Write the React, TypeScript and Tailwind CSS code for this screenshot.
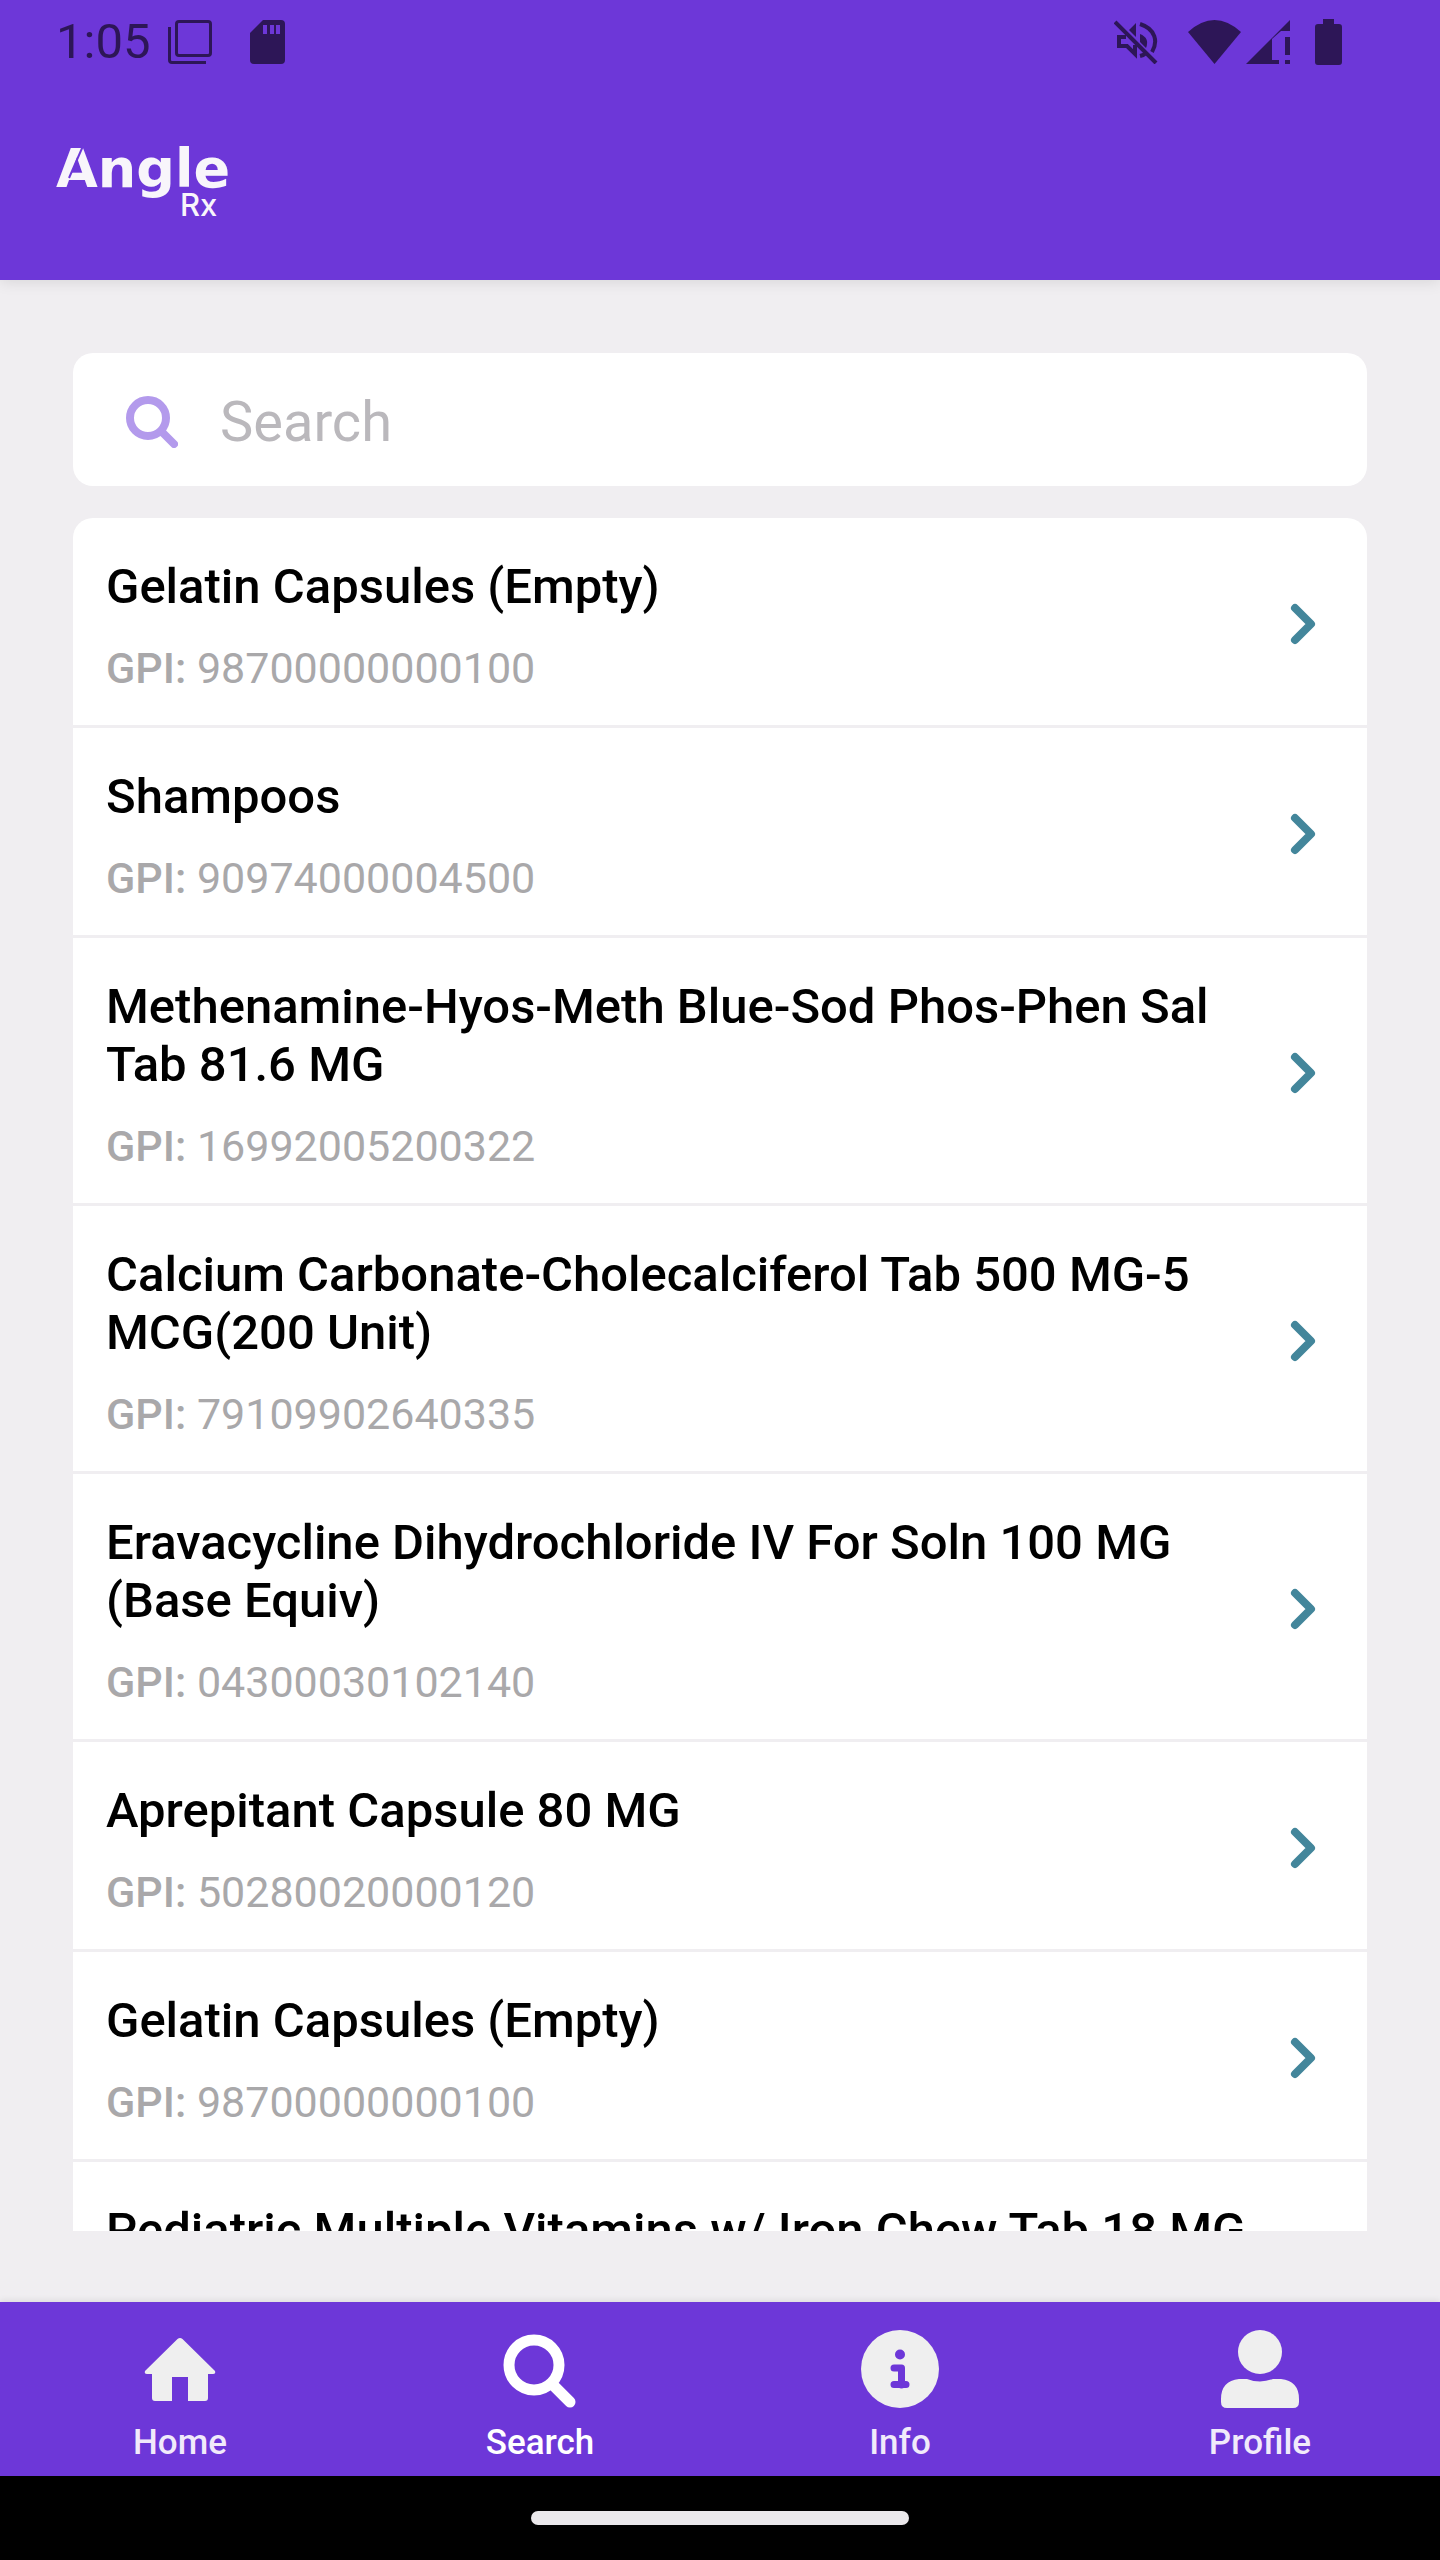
import React from 'react';

const drugs = [
  { name: 'Gelatin Capsules (Empty)', gpi: '98700000000100' },
  { name: 'Shampoos', gpi: '90974000004500' },
  { name: 'Methenamine-Hyos-Meth Blue-Sod Phos-Phen Sal Tab 81.6 MG', gpi: '16992005200322' },
  { name: 'Calcium Carbonate-Cholecalciferol Tab 500 MG-5 MCG(200 Unit)', gpi: '79109902640335' },
  { name: 'Eravacycline Dihydrochloride IV For Soln 100 MG (Base Equiv)', gpi: '04300030102140' },
  { name: 'Aprepitant Capsule 80 MG', gpi: '50280020000120' },
  { name: 'Gelatin Capsules (Empty)', gpi: '98700000000100' },
  { name: 'Pediatric Multiple Vitamins w/ Iron Chew Tab 18 MG', gpi: '' },
];

const StatusBar: React.FC = () => (
  <div className="flex h-[84px] items-center justify-between pl-14 pr-[98px] text-[#2d1657]">
    <div className="flex items-center">
      <span className="text-[49px] leading-[56px]">1:05</span>
      <svg className="ml-[18px] h-11 w-11" viewBox="0 0 44 44" fill="none" stroke="currentColor" strokeWidth="3">
        <rect x="8.5" y="1.5" width="34" height="34" rx="2.5" />
        <path d="M1.5 7v33q0 2.500 2.500 2.500h34" />
      </svg>
      <svg className="ml-[38px] h-11 w-[35px]" viewBox="0 0 35 44">
        <path fill="currentColor" d="M13 0h18a4 4 0 0 1 4 4v36a4 4 0 0 1-4 4H4a4 4 0 0 1-4-4V13z" />
        <path fill="#6d37d8" d="M13 5h4v9h-4zM20 5h4v9h-4zM26 5h4v9h-4z" />
      </svg>
    </div>
    <div className="flex items-center">
      <svg className="h-11 w-11" viewBox="0 0 44 44" fill="none" stroke="currentColor" strokeWidth="4">
        <path d="M1 2l41 41" />
        <path d="M12 17H5v9h8l8 8V25" />
        <path d="M26 4c16 5 18 18 12 28" />
        <path d="M26 36q4-1 6-3" />
        <path fill="currentColor" stroke="none" d="M22 3v14l-7-7zM26 14q10 4 6 14l-6-6z" />
      </svg>
      <svg className="ml-[30px] h-11 w-[53px]" viewBox="0 0 53 44">
        <path fill="currentColor" d="M0 12Q26.500-12 53 12L26.500 44z" />
      </svg>
      <svg className="ml-[5px] h-11 w-11" viewBox="0 0 44 44" fill="currentColor">
        <path d="M44 0v11H35L26 19v21h7v4H0z" />
        <path d="M39 17h5v18h-5zM39 40h5v4h-5z" />
      </svg>
      <svg className="ml-[25px] h-[46px] w-[27px]" viewBox="0 0 27 46" fill="currentColor">
        <path d="M8 0h11v5h5a3 3 0 0 1 3 3v35a3 3 0 0 1-3 3H3a3 3 0 0 1-3-3V8a3 3 0 0 1 3-3h5z" />
      </svg>
    </div>
  </div>
);

const Logo: React.FC = () => (
  <svg className="h-[84px] w-[180px] overflow-visible" viewBox="0 0 180 84" fill="#f8f5fb" role="img" aria-label="Angle Rx">
    <text x="0" y="47" fontFamily="DejaVu Sans, sans-serif" fontSize="54" fontWeight="700">Angle</text>
    <path d="M27 6L13 38" stroke="#6d37d8" strokeWidth="2" />
    <text x="124" y="76" fontFamily="Inter, sans-serif" fontSize="31" fontWeight="500">Rx</text>
  </svg>
);

const SearchIcon: React.FC<{ className: string }> = ({ className }) => (
  <svg className={className} viewBox="0 0 52 52" fill="none" stroke="currentColor" strokeLinecap="round" strokeWidth="8">
    <circle cx="22" cy="22" r="18" />
    <path d="M36 36l12 12" />
  </svg>
);

const tabs = [
  {
    label: 'Home',
    icon: (
      <svg className="h-[78px] w-[78px]" viewBox="0 0 78 78" fill="#efefef">
        <path d="M36.500 9q2.500-2 5 0L74 41q1 3-2 3H67v24q0 3-3 3H47V47H31v24H14q-3 0-3-3V44H6q-3 0-2-3z" />
      </svg>
    ),
  },
  {
    label: 'Search',
    active: true,
    icon: (
      <svg className="h-[78px] w-[78px]" viewBox="0 0 78 78" fill="none" stroke="#fff" strokeLinecap="round">
        <circle cx="33" cy="35" r="25" strokeWidth="11" />
        <path d="M54 57l15 15" strokeWidth="11" />
      </svg>
    ),
  },
  {
    label: 'Info',
    icon: (
      <svg className="h-[78px] w-[78px]" viewBox="0 0 78 78">
        <circle cx="39" cy="39" r="39" fill="#efefef" />
        <circle cx="39" cy="24.500" r="5" fill="#6d37d8" />
        <path d="M33 38h7.500v17M33 54.500h12" fill="none" stroke="#6d37d8" strokeWidth="7" strokeLinecap="round" strokeLinejoin="round" />
      </svg>
    ),
  },
  {
    label: 'Profile',
    icon: (
      <svg className="h-[78px] w-[78px]" viewBox="0 0 78 78" fill="#efefef">
        <circle cx="39" cy="22" r="22" />
        <path d="M18 49h8q13 5 26 0h8q18 2 18 20v3q0 6-6 6H6q-6 0-6-6v-3q0-18 18-20z" />
      </svg>
    ),
  },
];

const App: React.FC = () => {
  return (
    <div className="flex h-screen flex-col bg-[#f0eef1] font-['Roboto',sans-serif]">
      <header className="h-[280px] shrink-0 bg-[#6d37d8] shadow-[0_2px_14px_rgba(0,0,0,0.1)]">
        <StatusBar />
        <div className="px-14 pt-14">
          <Logo />
        </div>
      </header>

      <main className="flex min-h-0 flex-1 flex-col gap-8 px-[73px] pb-[71px] pt-[73px]">
        <label className="flex h-[133px] shrink-0 items-center rounded-[20px] bg-white pl-[53px] pr-8 pt-1">
          <SearchIcon className="h-[52px] w-[52px] shrink-0 text-[#b39aec]" />
          <input
            type="text"
            aria-label="Search"
            placeholder="Search"
            className="ml-[42px] min-w-0 flex-1 bg-transparent text-[56px] leading-[66px] outline-none placeholder:text-[#bab8bc]"
          />
        </label>

        <ul className="min-h-0 flex-1 overflow-hidden rounded-t-[20px] bg-white">
          {drugs.map((drug, i) => (
            <li key={i} className="border-b-3 border-[#f0eef1]">
              <a href="#" className="flex items-center justify-between pb-8 pl-[33px] pr-12 pt-10">
                <div className="w-[1160px] min-w-0">
                  <h2 className="text-[49px] font-medium leading-[58px] text-black">{drug.name}</h2>
                  <p className="mt-[27px] text-[43px] leading-[50px] text-[#a9a8aa]">
                    <span className="font-medium">GPI:</span> {drug.gpi}
                  </p>
                </div>
                <svg className="mb-1 h-12 w-8 shrink-0" viewBox="0 0 32 48" fill="none" stroke="#43869b" strokeWidth="8" strokeLinecap="round" strokeLinejoin="round">
                  <path d="M8 8l16 16L8 40" />
                </svg>
              </a>
            </li>
          ))}
        </ul>
      </main>

      <nav className="grid h-[174px] shrink-0 grid-cols-4 bg-[#6d37d8] shadow-[0_-2px_6px_rgba(0,0,0,0.08)]">
        {tabs.map((tab) => (
          <button key={tab.label} type="button" className="flex flex-col items-center gap-3.5 pt-7">
            {tab.icon}
            <span className={tab.active ? 'text-[35px] font-medium leading-[42px] text-white' : 'text-[35px] font-medium leading-[42px] text-[#f1eafb]'}>
              {tab.label}
            </span>
          </button>
        ))}
      </nav>

      <div className="flex h-[84px] shrink-0 items-center justify-center bg-black">
        <div className="h-[14px] w-[378px] rounded-full bg-[#ebe9ec]"></div>
      </div>
    </div>
  );
};

export default App;
